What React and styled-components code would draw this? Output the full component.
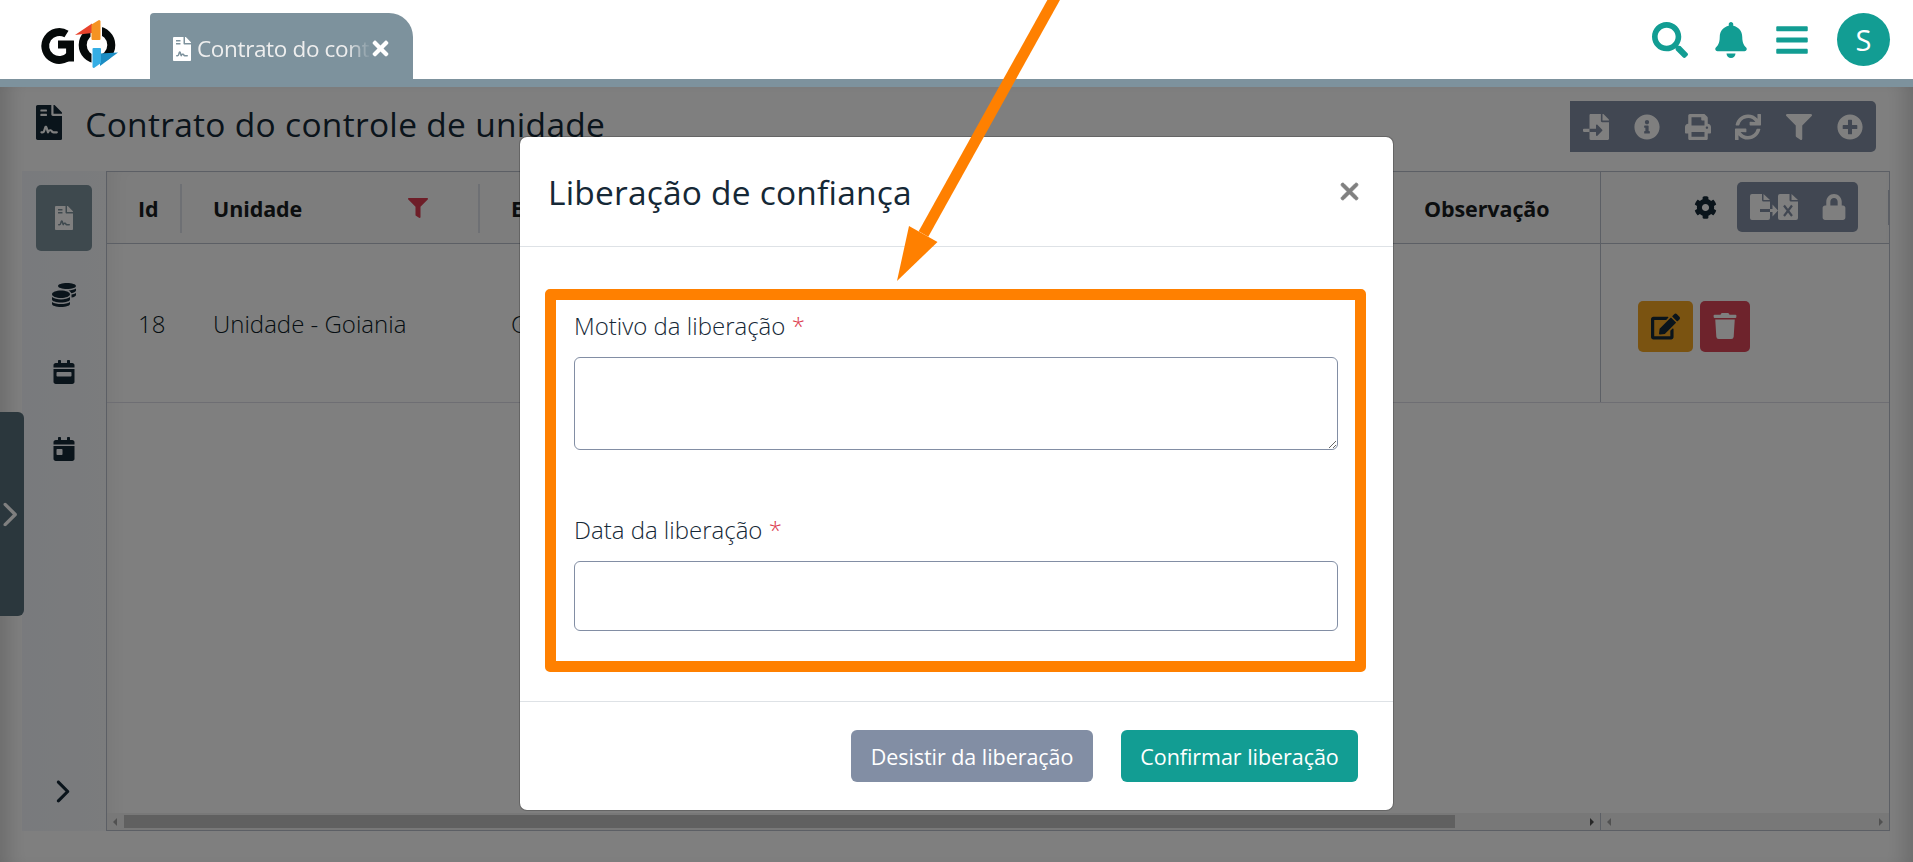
import React from "react";
import styled, { createGlobalStyle } from "styled-components";
import {
  FaSearch, FaBell, FaBars, FaFileImport, FaInfoCircle, FaPrint, FaSync, FaFilter, FaTimes,
  FaPlusCircle, FaCog, FaLock, FaTrash, FaCoins, FaEdit, FaFileContract, FaCalendarDay, FaCalendarWeek,
} from "react-icons/fa";
import { FaXmark, FaChevronRight } from "react-icons/fa6";

const Global = createGlobalStyle`
  * { box-sizing: border-box; }
  body { margin: 0; background: #fff; overflow: hidden; font-family: "Open Sans", "Noto Sans", sans-serif; color: #152836; }
  button { font: inherit; border: 0; padding: 0; }
  svg { flex: none; }
`;

const Page = styled.div`
  position: relative;
  height: 862px;
  display: flex;
  flex-direction: column;
`;

const TopBar = styled.header`
  height: 87px;
  flex: none;
  display: flex;
  align-items: flex-end;
  padding-left: 39px;
  padding-right: 23px;
  border-bottom: 8px solid #7d929d;
`;

const Logo = styled.svg`
  width: 80px;
  height: 50px;
  margin-bottom: 10px;
`;

const Tab = styled.div`
  width: 263px;
  height: 66px;
  margin-left: 31px;
  padding: 5px 20px 0 23px;
  display: flex;
  align-items: center;
  background: #7d929d;
  border-radius: 4px 24px 0 0;
  color: #fff;
`;

const TabLabel = styled.span`
  width: 172px;
  margin: -1px 0 0 6px;
  overflow: hidden;
  white-space: nowrap;
  font-size: 22.5px;
  letter-spacing: -0.35px;
  color: #eee;
  mask-image: linear-gradient(to right, #000 150px, transparent 174px);
`;

const TopActions = styled.nav`
  margin-left: auto;
  height: 79px;
  display: flex;
  align-items: center;
  color: #129d93;
`;

const Slot = styled.span`
  display: flex;
  margin-left: ${(p) => p.$ml || 0}px;
`;

const Avatar = styled.div`
  width: 53px;
  height: 53px;
  margin-left: 27px;
  border-radius: 50%;
  background: #129d93;
  color: #fff;
  font-size: 29px;
  display: flex;
  align-items: center;
  justify-content: center;
`;

const Workspace = styled.main`
  position: relative;
  flex: 1;
  display: flex;
  flex-direction: column;
  padding: 14px 23px 31px 22px;
  box-shadow: inset 22px 0 20px -14px rgba(0, 0, 0, 0.16), inset -22px 0 20px -14px rgba(0, 0, 0, 0.16);
`;

const Heading = styled.div`
  height: 70px;
  display: flex;
  align-items: flex-start;
  padding: 0 14px 0 14px;
`;

const PageTitle = styled.h1`
  margin: -1px 0 0 23px;
  font-size: 33.5px;
  line-height: 48px;
  font-weight: 500;
  letter-spacing: 0.3px;
  white-space: nowrap;
`;

const TitleIcon = styled.span`
  display: flex;
  margin-top: 4px;
`;

const ContractIcon = styled(FaFileContract)`
  width: ${(p) => p.$h * 0.75}px;
  height: ${(p) => p.$h}px;
`;

const Toolbar = styled.div`
  margin-left: auto;
  width: 306px;
  height: 51px;
  padding-left: 1px;
  padding-right: 1px;
  display: flex;
  align-items: center;
  background: #828ea4;
  color: #fff;
  border-radius: 0 5px 5px 0;
`;

const ToolButton = styled.span`
  flex: 1;
  display: flex;
  justify-content: center;
`;

const Body = styled.div`
  flex: 1;
  display: flex;
`;

const SideNav = styled.aside`
  width: 84px;
  display: flex;
  flex-direction: column;
  align-items: center;
  padding: 14px 0 14px;
  background: linear-gradient(to right, #f2f5fb, #f6f8fb);
`;

const SideItem = styled.span`
  width: 56px;
  height: 66px;
  margin-bottom: 11px;
  margin-top: ${(p) => (p.$last ? "auto" : "0")};
  ${(p) => p.$last && "margin-bottom: 0; height: 52px; padding-right: 5px;"}
  display: flex;
  align-items: center;
  justify-content: center;
  border-radius: 5px;
  background: ${(p) => (p.$active ? "#7d929d" : "transparent")};
  color: ${(p) => (p.$active ? "#fff" : "#152836")};
`;

const Grid = styled.section`
  flex: 1;
  display: flex;
  flex-direction: column;
  border: 1px solid #b9bfca;
  box-shadow: inset 18px 0 18px -12px rgba(0, 0, 0, 0.06);
`;

const Row = styled.div`
  display: flex;
  height: ${(p) => p.$h}px;
  border-bottom: 1px solid ${(p) => (p.$head ? "#b9bfca" : "#dcdce6")};
  background: ${(p) => (p.$head ? "rgba(0,0,0,.02)" : "transparent")};
`;

const Cell = styled.div`
  width: ${(p) => p.$w}px;
  padding-left: 31px;
  padding-top: 1px;
  display: flex;
  align-items: center;
  white-space: nowrap;
  font-size: 24px;
  font-weight: 300;
  color: #0c1a26;
`;

const HeadCell = styled(Cell)`
  font-size: 21.5px;
  font-weight: 700;
  letter-spacing: -0.1px;
  color: #181d1f;
`;

const Divider = styled.span`
  width: 2px;
  height: 49px;
  margin-left: auto;
  background: #dde0e8;
`;

const Pinned = styled.div`
  width: 289px;
  margin-left: auto;
  border-left: 1px solid #b9bfca;
  display: flex;
  align-items: center;
  padding-left: ${(p) => p.$pl}px;
  padding-top: ${(p) => p.$pt || 0}px;
`;

const ExportGroup = styled.div`
  width: 121px;
  height: 50px;
  margin: -1px 0 0 20px;
  padding: 0 11px 0 13px;
  display: flex;
  align-items: center;
  justify-content: space-between;
  background: #828ea4;
  color: #fff;
  border-radius: 5px;
`;

const EdgeMark = styled.span`
  width: 1px;
  height: 35px;
  margin: 0 0 0 auto;
  background: #b9bfca;
`;

const RowButton = styled.button`
  width: ${(p) => p.$w}px;
  height: 51px;
  margin-right: 7px;
  display: flex;
  align-items: center;
  justify-content: center;
  border-radius: 5px;
  background: ${(p) => p.$bg};
  color: ${(p) => p.$fg};
`;

const ScrollTrack = styled.div`
  margin-top: auto;
  height: 17px;
  display: flex;
  background: #f1f1f1;
`;

const TrackPart = styled.div`
  width: ${(p) => p.$w}px;
  display: flex;
  align-items: center;
  padding: 0 6px;
  ${(p) => p.$line && "margin-left: auto; border-left: 1px solid #b9bfca;"}
`;

const Thumb = styled.span`
  width: 1331px;
  height: 13px;
  margin-left: 7px;
  background: #c1c1c1;
`;

const Caret = styled.span`
  width: 0;
  height: 0;
  border: 4px solid transparent;
  border-left-width: ${(p) => (p.$right ? 4 : 0)}px;
  border-right-width: ${(p) => (p.$right ? 0 : 4)}px;
  border-${(p) => (p.$right ? "left" : "right")}-color: ${(p) => (p.$dark ? "#505050" : "#a3a3a3")};
  ${(p) => p.$right && "margin-left: auto;"}
`;

const Drawer = styled.div`
  position: absolute;
  left: 0;
  top: 325px;
  width: 24px;
  height: 204px;
  display: flex;
  align-items: center;
  justify-content: center;
  padding-right: 7px;
  background: #566e7a;
  color: #fff;
  border-radius: 0 6px 6px 0;
`;

const Backdrop = styled.div`
  position: absolute;
  inset: 87px 0 0;
  background: rgba(0, 0, 0, 0.5);
`;

const Modal = styled.div`
  position: absolute;
  left: 519px;
  top: 136px;
  width: 875px;
  height: 675px;
  display: flex;
  flex-direction: column;
  background: #fff;
  background-clip: padding-box;
  border: 1px solid rgba(0, 0, 0, 0.2);
  border-radius: 8px;
`;

const ModalHeader = styled.div`
  height: 110px;
  display: flex;
  align-items: center;
  justify-content: space-between;
  padding: 0 30px 0 28px;
  border-bottom: 1px solid #dee2e6;
  color: #808080;
`;

const ModalTitle = styled.h2`
  margin: 0;
  font-size: 33.5px;
  font-weight: 500;
  letter-spacing: 0.2px;
  color: #152836;
`;

const ModalBody = styled.div`
  height: 455px;
  padding: 42px 27px 29px 25px;
  border-bottom: 1px solid #dee2e6;
`;

const Highlight = styled.div`
  height: 383px;
  border: 11px solid #ff8000;
  border-radius: 5px;
  padding: 9px 17px 0 18px;
`;

const Label = styled.label`
  display: block;
  height: 48px;
  font-size: 24px;
  font-weight: 300;
  line-height: 33px;
  color: #152836;
  em { font-style: normal; color: #dc3d50; }
`;

const TextBox = styled.textarea`
  display: block;
  width: 100%;
  height: 93px;
  margin: 0 0 63px;
  border: 1px solid #828ea4;
  border-radius: 6px;
  background: #fff;
`;

const DateInput = styled.input`
  display: block;
  width: 100%;
  height: 70px;
  border: 1px solid #828ea4;
  border-radius: 6px;
`;

const ModalFooter = styled.div`
  flex: 1;
  display: flex;
  align-items: center;
  justify-content: flex-end;
  gap: 28px;
  padding: 0 35px 0 0;
`;

const Button = styled.button`
  width: ${(p) => p.$w}px;
  height: 52px;
  padding-top: 1px;
  border-radius: 6px;
  background: ${(p) => p.$bg};
  color: #fff;
  font-size: 21.5px;
  letter-spacing: -0.05px;
  white-space: nowrap;
`;

const Pointer = styled.svg`
  position: absolute;
  left: 0;
  top: 0;
  pointer-events: none;
`;

const ExportExcel = () => (
  <svg width="48" height="26" viewBox="0 0 48 26" fill="#fff">
    <path fillRule="evenodd" d="M2 0H12V6q0 1.500 1.500 1.500H20V15H10V18H20V24q0 2-2 2H2q-2 0-2-2V2Q0 0 2 0Z" />
    <path d="M13.500 0L20 6H13.500ZM20 15H22.500V10.500L28 16.500L22.500 22.500V18H20Z" />
    <path d="M30 0H39.500V6q0 1.500 1.500 1.500H48V24q0 2-2 2H30q-2 0-2-2V2Q28 0 30 0Z" />
    <path d="M41.500 0L48 6H41.500Z" />
    <path d="M34 11.500L42 22M42 11.500L34 22" stroke="#828ea4" strokeWidth="2.200" />
  </svg>
);

export default function App() {
  return (
    <>
      <Global />
      <Page>
        <TopBar>
          <Logo viewBox="0 0 80 50">
            <path d="M27.500 15A14 14 0 1 0 31 36V25.500H19" fill="none" stroke="#050909" strokeWidth="7.800" />
            <path d="M35 42.500V22H28V42.500Z" fill="#050909" stroke="none" />
            <ellipse cx="58" cy="26" rx="14.300" ry="14.500" fill="none" stroke="#050909" strokeWidth="8" />
            <path d="M51.500 3H63V23H51.500ZM52.500 28H63V47H52.500Z" fill="#fff" />
            <path d="M36 16L53 4.500V14Z" fill="#e8432c" />
            <path d="M52.500 5.500L60 1q1.500 0 1.500 1.500V20q0 1-1 1H53.500q-1 0-1-1Z" fill="#f59322" />
            <path d="M61 34.500L79 33.500L61 47Z" fill="#1b8dc4" />
            <path d="M53.500 30q0-1 1-1H61q1 0 1 1V44L55 49q-1.500 0-1.500-1.500Z" fill="#35aee5" />
          </Logo>
          <Tab>
            <ContractIcon $h={24} />
            <TabLabel>Contrato do controle</TabLabel>
            <FaTimes size={23} />
          </Tab>
          <TopActions>
            <Slot><FaSearch size={36} /></Slot>
            <Slot $ml={25}><FaBell size={36} /></Slot>
            <Slot $ml={25}><FaBars size={36} /></Slot>
            <Avatar>S</Avatar>
          </TopActions>
        </TopBar>
        <Workspace>
          <Heading>
            <TitleIcon><ContractIcon $h={35} /></TitleIcon>
            <PageTitle>Contrato do controle de unidade</PageTitle>
            <Toolbar>
              <ToolButton><FaFileImport size={26} /></ToolButton>
              <ToolButton><FaInfoCircle size={26} /></ToolButton>
              <ToolButton><FaPrint size={26} /></ToolButton>
              <ToolButton><FaSync size={26} /></ToolButton>
              <ToolButton><FaFilter size={26} /></ToolButton>
              <ToolButton><FaPlusCircle size={26} /></ToolButton>
            </Toolbar>
          </Heading>
          <Body>
            <SideNav>
              <SideItem $active><ContractIcon $h={24} /></SideItem>
              <SideItem><FaCoins size={24} /></SideItem>
              <SideItem><FaCalendarWeek size={24} /></SideItem>
              <SideItem><FaCalendarDay size={24} /></SideItem>
              <SideItem $last><FaChevronRight size={25} /></SideItem>
            </SideNav>
            <Grid>
              <Row $h={72} $head>
                <HeadCell $w={75}>Id<Divider /></HeadCell>
                <HeadCell $w={298}>
                  Unidade
                  <Slot $ml={106}><FaFilter size={20} color="#dc3d50" /></Slot>
                  <Divider />
                </HeadCell>
                <HeadCell $w={913}>E</HeadCell>
                <HeadCell $w={200}>Observação</HeadCell>
                <Pinned $pl={93}>
                  <FaCog size={23} color="#152836" />
                  <ExportGroup><ExportExcel /><FaLock size={26} /></ExportGroup>
                  <EdgeMark />
                </Pinned>
              </Row>
              <Row $h={159}>
                <Cell $w={75}>18</Cell>
                <Cell $w={298}>Unidade - Goiania</Cell>
                <Cell $w={912}>G</Cell>
                <Pinned $pl={37} $pt={6}>
                  <RowButton $w={55} $bg="#f5a623" $fg="#152836"><FaEdit size={29} /></RowButton>
                  <RowButton $w={50} $bg="#dc4659" $fg="#fff"><FaTrash size={26} /></RowButton>
                </Pinned>
              </Row>
              <ScrollTrack>
                <TrackPart $w={1493}><Caret /><Thumb /><Caret $right $dark /></TrackPart>
                <TrackPart $w={289} $line><Caret /><Caret $right /></TrackPart>
              </ScrollTrack>
            </Grid>
          </Body>
          <Drawer><FaChevronRight size={27} /></Drawer>
        </Workspace>
        <Backdrop />
        <Modal>
          <ModalHeader>
            <ModalTitle>Liberação de confiança</ModalTitle>
            <FaXmark size={27} stroke="#808080" strokeWidth={16} />
          </ModalHeader>
          <ModalBody>
            <Highlight>
              <Label>Motivo da liberação <em>*</em></Label>
              <TextBox />
              <Label>Data da liberação <em>*</em></Label>
              <DateInput />
            </Highlight>
          </ModalBody>
          <ModalFooter>
            <Button $w={242} $bg="#828ea4">Desistir da liberação</Button>
            <Button $w={237} $bg="#129d93">Confirmar liberação</Button>
          </ModalFooter>
        </Modal>
        <Pointer width="1200" height="300" viewBox="0 0 1200 300">
          <path d="M1057 -6L923.500 234" stroke="#ff8000" strokeWidth="11" />
          <path d="M909 226L937.500 242L897 281Z" fill="#ff8000" />
        </Pointer>
      </Page>
    </>
  );
}
